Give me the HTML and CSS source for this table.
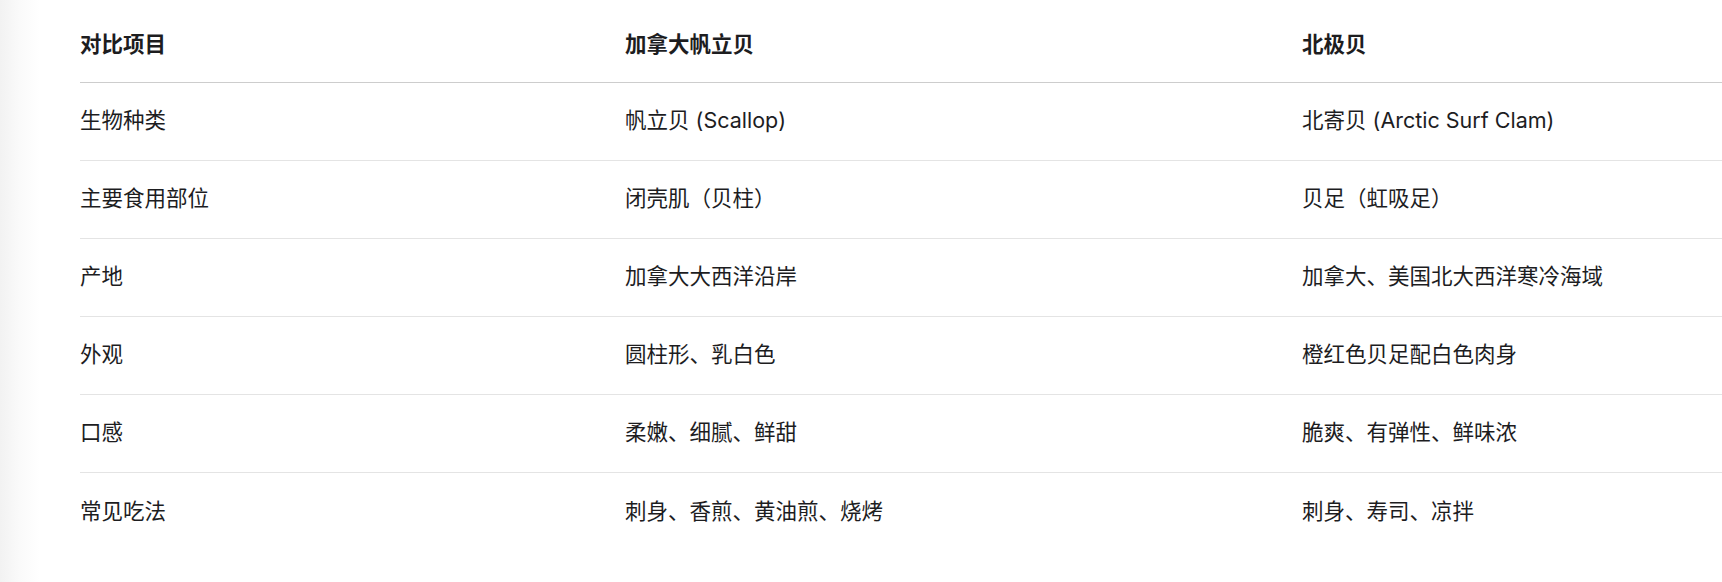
FILE: index.html
```html
<!DOCTYPE html>
<html lang="zh-CN">
<head>
<meta charset="utf-8">
<title>加拿大帆立贝 vs 北极贝</title>
<link rel="stylesheet" href="styles.css">
</head>
<body>
<div class="table">
  <div class="row head">
    <div class="cell">对比项目</div>
    <div class="cell">加拿大帆立贝</div>
    <div class="cell">北极贝</div>
  </div>
  <div class="row">
    <div class="cell">生物种类</div>
    <div class="cell">帆立贝 (Scallop)</div>
    <div class="cell">北寄贝 (Arctic Surf Clam)</div>
  </div>
  <div class="row">
    <div class="cell">主要食用部位</div>
    <div class="cell">闭壳肌（贝柱）</div>
    <div class="cell">贝足（虹吸足）</div>
  </div>
  <div class="row">
    <div class="cell">产地</div>
    <div class="cell">加拿大大西洋沿岸</div>
    <div class="cell">加拿大、美国北大西洋寒冷海域</div>
  </div>
  <div class="row">
    <div class="cell">外观</div>
    <div class="cell">圆柱形、乳白色</div>
    <div class="cell">橙红色贝足配白色肉身</div>
  </div>
  <div class="row">
    <div class="cell">口感</div>
    <div class="cell">柔嫩、细腻、鲜甜</div>
    <div class="cell">脆爽、有弹性、鲜味浓</div>
  </div>
  <div class="row last">
    <div class="cell">常见吃法</div>
    <div class="cell">刺身、香煎、黄油煎、烧烤</div>
    <div class="cell">刺身、寿司、凉拌</div>
  </div>
</div>
</body>
</html>
```
FILE: styles.css
```css
html, body {
  margin: 0;
  padding: 0;
  overflow: hidden;
}
body {
  background: linear-gradient(to right, #f2f2f2 0px, #fafafa 20px, #ffffff 40px);
  font-family: Inter, "Noto Sans CJK SC", sans-serif;
  color: #1d1d1f;
  font-size: 21.5px;
  height: 582px;
}
.table {
  margin-left: 80px;
  padding-top: 8px;
  width: 1642px;
}
.row {
  display: grid;
  grid-template-columns: 545px 677px 1fr;
  align-items: center;
  height: 78px;
  box-sizing: border-box;
  border-bottom: 1px solid #e4e4e4;
}
.row.head {
  height: 75px;
  border-bottom: 1px solid #cdcdcd;
  font-weight: 700;
}
.row.last {
  border-bottom: none;
}
.cell {
  line-height: 30px;
  padding-bottom: 3px;
  white-space: nowrap;
}
```
